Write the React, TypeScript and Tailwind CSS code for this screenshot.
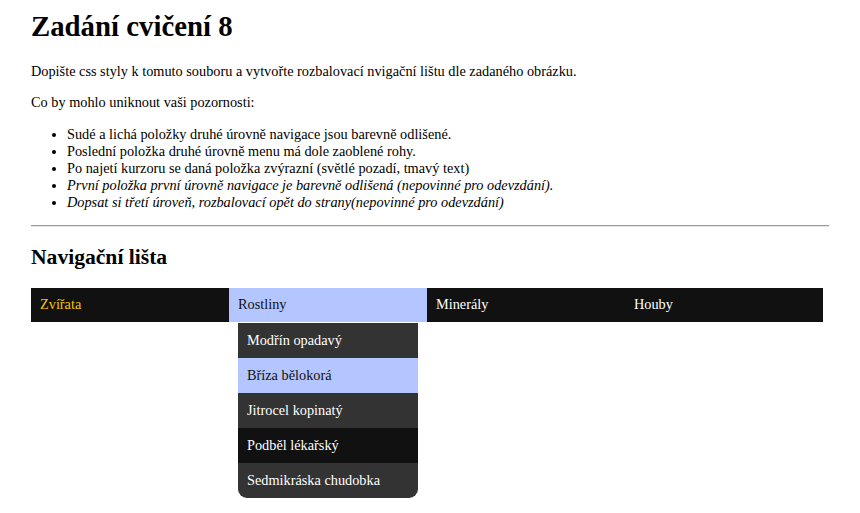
import React from 'react';

const topMenu = ['Zvířata', 'Rostliny', 'Minerály', 'Houby'];

const plants = [
  'Modřín opadavý',
  'Bříza bělokorá',
  'Jitrocel kopinatý',
  'Podběl lékařský',
  'Sedmikráska chudobka',
];

const notes = [
  { text: 'Sudé a lichá položky druhé úrovně navigace jsou barevně odlišené.', italic: false },
  { text: 'Poslední položka druhé úrovně menu má dole zaoblené rohy.', italic: false },
  { text: 'Po najetí kurzoru se daná položka zvýrazní (světlé pozadí, tmavý text)', italic: false },
  { text: 'První položka první úrovně navigace je barevně odlišená (nepovinné pro odevzdání).', italic: true },
  { text: 'Dopsat si třetí úroveň, rozbalovací opět do strany(nepovinné pro odevzdání)', italic: true },
];

export default function App() {
  return (
    <div className="min-h-[513px] bg-white pl-[31px] text-black font-['Liberation_Serif','Times_New_Roman',serif] text-[14.3px]">
      <div className="w-[798px]">
        <h1 className="mt-[10px] text-[28.8px] leading-[33px] font-bold">Zadání cvičení 8</h1>
        <p className="mt-[20px] leading-[17px]">
          Dopište css styly k tomuto souboru a vytvořte rozbalovací nvigační lištu dle zadaného obrázku.
        </p>
        <p className="mt-[14px] leading-[17px]">Co by mohlo uniknout vaši pozornosti:</p>
        <ul className="mt-[15px] list-disc pl-[36px] leading-[17px]">
          {notes.map((n) => (
            <li key={n.text} className={n.italic ? 'italic' : ''}>
              {n.text}
            </li>
          ))}
        </ul>
        <div className="mt-[14px] h-[2px] border-t border-b border-t-[#9a9a9a] border-b-[#e6e6e6]"></div>
        <h2 className="mt-[18px] text-[21.6px] leading-[25px] font-bold">Navigační lišta</h2>

        <nav className="mt-[18px] w-[792px]">
          <ul className="grid grid-cols-4 bg-[#111111]">
            {topMenu.map((item, i) => (
              <li key={item} className="relative">
                <div
                  className={
                    'h-[34px] px-[9px] flex items-center ' +
                    (i === 1 ? 'bg-[#b3c6ff] text-[#111111]' : i === 0 ? 'text-[#f5c400]' : 'text-white')
                  }
                >
                  {item}
                </div>
                {i === 1 && (
                  <ul className="absolute left-[9px] top-[35px] w-[180px] overflow-hidden rounded-b-[9px]">
                    {plants.map((p, j) => (
                      <li
                        key={p}
                        className={
                          'h-[35px] px-[9px] flex items-center ' +
                          (j === 1
                            ? 'bg-[#b3c6ff] text-[#111111]'
                            : j % 2 === 1
                            ? 'bg-[#111111] text-white'
                            : 'bg-[#333333] text-white')
                        }
                      >
                        {p}
                      </li>
                    ))}
                  </ul>
                )}
              </li>
            ))}
          </ul>
        </nav>
      </div>
    </div>
  );
}
